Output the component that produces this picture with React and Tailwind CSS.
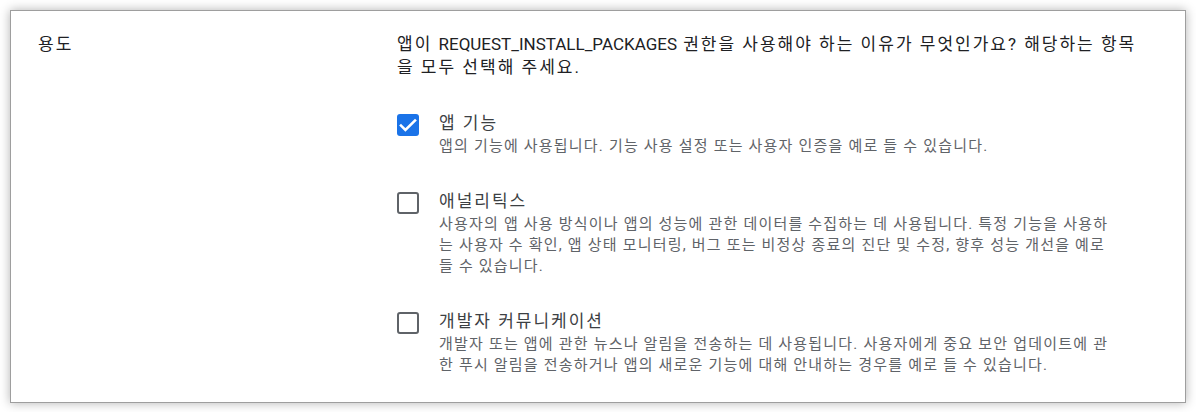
import React from "react";

const options = [
  {
    title: "앱 기능",
    desc: "앱의 기능에 사용됩니다. 기능 사용 설정 또는 사용자 인증을 예로 들 수 있습니다.",
    checked: true,
  },
  {
    title: "애널리틱스",
    desc: "사용자의 앱 사용 방식이나 앱의 성능에 관한 데이터를 수집하는 데 사용됩니다. 특정 기능을 사용하는 사용자 수 확인, 앱 상태 모니터링, 버그 또는 비정상 종료의 진단 및 수정, 향후 성능 개선을 예로 들 수 있습니다.",
    checked: false,
  },
  {
    title: "개발자 커뮤니케이션",
    desc: "개발자 또는 앱에 관한 뉴스나 알림을 전송하는 데 사용됩니다. 사용자에게 중요 보안 업데이트에 관한 푸시 알림을 전송하거나 앱의 새로운 기능에 대해 안내하는 경우를 예로 들 수 있습니다.",
    checked: false,
  },
];

function Box({ checked }) {
  if (checked) {
    return (
      <div className="mt-[3px] h-[22px] w-[22px] shrink-0 rounded-[3px] bg-[#1a73e8]">
        <svg width="22" height="22" viewBox="0 0 22 22" fill="none">
          <path d="M4 11.6l4.4 4.4L18 6.6" stroke="white" strokeWidth="2.6" strokeLinecap="square" />
        </svg>
      </div>
    );
  }
  return <div className="mt-[3px] h-[22px] w-[22px] shrink-0 rounded-[3px] border-[2px] border-[#5f6368] bg-white" />;
}

export default function App() {
  return (
    <div className="min-h-[412px] bg-white p-[10px]" style={{ fontFamily: "Roboto, 'Noto Sans CJK KR', sans-serif" }}>
      <div className="flex border border-[#9e9e9e] bg-white pb-[26px] pl-[27px] pt-[22px] shadow-[0_0_10px_rgba(0,0,0,0.3)]">
        <div className="w-[359px] shrink-0 text-[17px] leading-[23px] tracking-[2px] text-[#202124]">용도</div>
        <div className="flex flex-col">
          <p className="w-[748px] text-[17px] leading-[23px] tracking-[2px] text-[#202124]">
            앱이 <span className="tracking-normal">REQUEST_INSTALL_PACKAGES</span> 권한을 사용해야 하는 이유가 무엇인가요? 해당하는 항목을 모두 선택해 주세요.
          </p>
          <div className="mt-[32px] flex flex-col gap-[32px]">
            {options.map((o) => (
              <div key={o.title} className="flex gap-[20px]">
                <Box checked={o.checked} />
                <div className="flex w-[676px] flex-col">
                  <div className="text-[17px] leading-[25px] tracking-[2px] text-[#3c4043]">{o.title}</div>
                  <div className="text-[15px] leading-[21px] tracking-[1.2px] text-[#5f6368]">{o.desc}</div>
                </div>
              </div>
            ))}
          </div>
        </div>
      </div>
    </div>
  );
}
